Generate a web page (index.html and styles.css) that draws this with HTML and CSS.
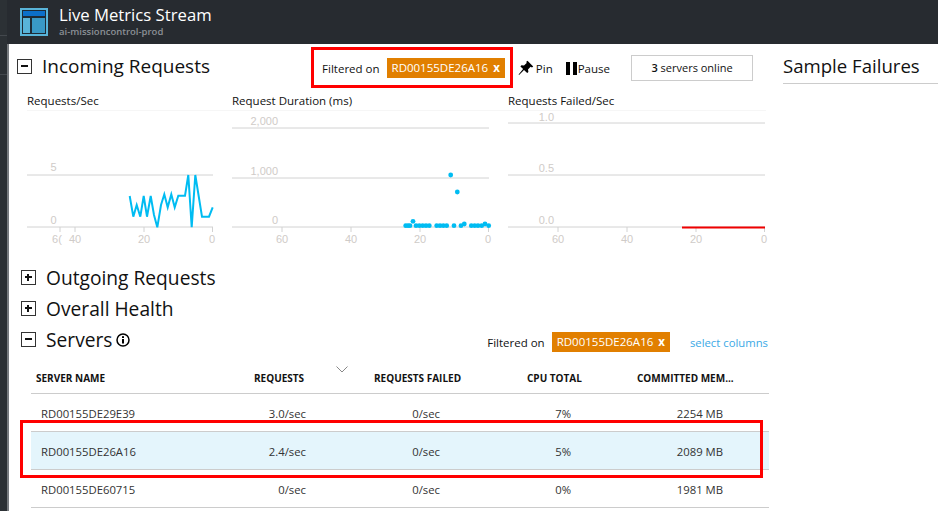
FILE: index.html
```html
<!DOCTYPE html>
<html lang="en">
<head>
    <meta charset="UTF-8">
    <meta name="viewport" content="width=device-width, initial-scale=1.0">
    <title>Live Metrics Stream</title>
    <link rel="stylesheet" href="styles.css">
</head>
<body>
<div class="rail"></div>
<div class="page">
    <header class="topbar">
        <svg class="logo" viewBox="0 0 28 28">
            <rect x="0" y="0" width="28" height="28" fill="#59b4d9"/>
            <rect x="2" y="2" width="24" height="24" fill="#1e2b36"/>
            <rect x="3" y="3" width="22" height="5" fill="#0c6fc9"/>
            <rect x="3" y="10" width="7" height="15" fill="#59b4d9"/>
            <rect x="12" y="10" width="13" height="15" fill="#3999c6"/>
        </svg>
        <div>
            <div class="topbar-title">Live Metrics Stream</div>
            <div class="topbar-sub">ai-missioncontrol-prod</div>
        </div>
    </header>

    <div class="content">
        <main class="metrics">
            <section class="incoming">
                <div class="incoming-head">
                    <span class="toggle minus"></span>
                    <h2>Incoming Requests</h2>
                    <div class="filter-tools">
                        <span class="filter-label">Filtered on</span>
                        <span class="chip">RD00155DE26A16 <b>x</b></span>
                        <span class="tool pin-tool">
                            <svg width="16" height="16" viewBox="0 0 16 16"><path d="M9.5 0.8 L15.2 6.4 L14 7.4 L12.6 6.8 L10 9.4 L10.4 12 L9.2 13 L6 9.9 L1 15 L0.6 14.6 L5.1 9 L2.4 6.4 L3.4 5.2 L6 5.6 L8.7 3.1 L8.3 1.8 Z" fill="#000"/></svg>
                            Pin
                        </span>
                        <span class="tool pause-tool"><i class="pause-bars"></i>Pause</span>
                        <span class="online"><b>3</b>&nbsp;servers online</span>
                    </div>
                </div>
                <div class="charts">
                    <div class="chart chart-rate">
                        <div class="chart-title">Requests/Sec</div>
                        <svg width="186" height="140" viewBox="27 110 186 140">
                            <line class="grid" x1="27" y1="175" x2="213" y2="175"/>
                            <line class="grid" x1="27" y1="227" x2="213" y2="227"/>
                            <line class="grid" x1="60" y1="227" x2="60" y2="232"/>
                            <line class="grid" x1="75" y1="227" x2="75" y2="232"/>
                            <line class="grid" x1="144" y1="227" x2="144" y2="232"/>
                            <line class="grid" x1="212.5" y1="227" x2="212.5" y2="232"/>
                            <text x="53.5" y="171" text-anchor="middle">5</text>
                            <text x="53.5" y="224" text-anchor="middle">0</text>
                            <text x="57" y="243" text-anchor="middle">6(</text>
                            <text x="75" y="243" text-anchor="middle">40</text>
                            <text x="144" y="243" text-anchor="middle">20</text>
                            <text x="212" y="243" text-anchor="middle">0</text>
                            <polyline class="line-blue" points="129.7,196 133.3,216.7 136.7,205 140.3,216.7 143.7,196 147,216.7 150.7,196 154,215 157.3,227.3 161,205 164.3,194.3 167.7,207.3 171.3,194.3 174.7,207.3 178.3,195.7 185,195.7 188.3,175 191.7,227.3 195.3,175 202,216.7 209,216.7 212.7,207.3"/>
                        </svg>
                    </div>
                    <div class="chart chart-duration">
                        <div class="chart-title">Request Duration (ms)</div>
                        <svg width="258" height="140" viewBox="232 110 258 140">
                            <line class="grid" x1="232" y1="128" x2="489" y2="128"/>
                            <line class="grid" x1="232" y1="178" x2="489" y2="178"/>
                            <line class="grid" x1="232" y1="227" x2="489" y2="227"/>
                            <line class="grid" x1="282" y1="227" x2="282" y2="232"/>
                            <line class="grid" x1="351" y1="227" x2="351" y2="232"/>
                            <line class="grid" x1="420" y1="227" x2="420" y2="232"/>
                            <line class="grid" x1="488.5" y1="227" x2="488.5" y2="232"/>
                            <text x="278" y="125" text-anchor="end">2,000</text>
                            <text x="278" y="175" text-anchor="end">1,000</text>
                            <text x="278" y="224" text-anchor="end">0</text>
                            <text x="282" y="243" text-anchor="middle">60</text>
                            <text x="351" y="243" text-anchor="middle">40</text>
                            <text x="420" y="243" text-anchor="middle">20</text>
                            <text x="488" y="243" text-anchor="middle">0</text>
                            <g class="dots">
                                <circle cx="405.7" cy="225.7" r="2.4"/><circle cx="408" cy="225.7" r="2.4"/><circle cx="410" cy="225.7" r="2.4"/>
                                <circle cx="413" cy="221.3" r="2.4"/>
                                <circle cx="416" cy="225.7" r="2.4"/><circle cx="419.3" cy="225.7" r="2.4"/><circle cx="422.7" cy="225.7" r="2.4"/><circle cx="426" cy="225.7" r="2.4"/><circle cx="429.3" cy="225.7" r="2.4"/>
                                <circle cx="436.7" cy="225.7" r="2.4"/><circle cx="440" cy="225.7" r="2.4"/><circle cx="443.3" cy="225.7" r="2.4"/><circle cx="446.7" cy="225.7" r="2.4"/>
                                <circle cx="450.7" cy="175" r="2.4"/>
                                <circle cx="454" cy="225.7" r="2.4"/>
                                <circle cx="457.3" cy="192" r="2.4"/>
                                <circle cx="461" cy="225.7" r="2.4"/>
                                <circle cx="464.3" cy="224" r="2.4"/>
                                <circle cx="471.3" cy="225.7" r="2.4"/><circle cx="474.7" cy="225.7" r="2.4"/><circle cx="478" cy="225.7" r="2.4"/><circle cx="481.7" cy="225.7" r="2.4"/>
                                <circle cx="485" cy="224" r="2.4"/>
                                <circle cx="488.7" cy="225.7" r="2.4"/>
                            </g>
                        </svg>
                    </div>
                    <div class="chart chart-failed">
                        <div class="chart-title">Requests Failed/Sec</div>
                        <svg width="258" height="140" viewBox="508 110 258 140">
                            <line class="grid" x1="508" y1="123" x2="765" y2="123"/>
                            <line class="grid" x1="508" y1="175" x2="765" y2="175"/>
                            <line class="grid" x1="508" y1="227" x2="765" y2="227"/>
                            <line class="grid" x1="558" y1="227" x2="558" y2="232"/>
                            <line class="grid" x1="627" y1="227" x2="627" y2="232"/>
                            <line class="grid" x1="696" y1="227" x2="696" y2="232"/>
                            <line class="grid" x1="764.5" y1="227" x2="764.5" y2="232"/>
                            <text x="554" y="121" text-anchor="end">1.0</text>
                            <text x="554" y="172" text-anchor="end">0.5</text>
                            <text x="554" y="224" text-anchor="end">0.0</text>
                            <text x="558" y="243" text-anchor="middle">60</text>
                            <text x="627" y="243" text-anchor="middle">40</text>
                            <text x="696" y="243" text-anchor="middle">20</text>
                            <text x="764" y="243" text-anchor="middle">0</text>
                            <line class="line-red" x1="682" y1="227.5" x2="765" y2="227.5"/>
                        </svg>
                    </div>
                </div>
            </section>

            <div class="section-head first-collapsed"><span class="toggle plus"></span><h2>Outgoing Requests</h2></div>
            <div class="section-head"><span class="toggle plus"></span><h2>Overall Health</h2></div>
            <div class="section-head">
                <span class="toggle minus"></span><h2>Servers</h2>
                <svg class="info" width="14" height="14" viewBox="0 0 14 14"><circle cx="7" cy="7" r="6" fill="none" stroke="#000" stroke-width="1.5"/><rect x="6" y="6" width="2" height="4.5"/><rect x="6" y="3.2" width="2" height="1.8"/></svg>
                <div class="servers-tools">
                    <span class="filter-label">Filtered on</span>
                    <span class="chip">RD00155DE26A16 <b>x</b></span>
                    <a class="select-columns">select columns</a>
                </div>
            </div>

            <div class="servers">
                <div class="row row-head">
                    <span>SERVER NAME</span>
                    <span>REQUESTS</span>
                    <span>REQUESTS FAILED</span>
                    <span>CPU TOTAL</span>
                    <span>COMMITTED MEM...</span>
                    <svg class="sort" width="12" height="7" viewBox="0 0 12 7"><path d="M0.5 0.5 L6 6 L11.5 0.5" fill="none" stroke="#888" stroke-width="1"/></svg>
                </div>
                <div class="row">
                    <span>RD00155DE29E39</span><span>3.0/sec</span><span>0/sec</span><span>7%</span><span>2254 MB</span>
                </div>
                <div class="row selected">
                    <span>RD00155DE26A16</span><span>2.4/sec</span><span>0/sec</span><span>5%</span><span>2089 MB</span>
                </div>
                <div class="row">
                    <span>RD00155DE60715</span><span>0/sec</span><span>0/sec</span><span>0%</span><span>1981 MB</span>
                </div>
            </div>
        </main>

        <aside class="failures">
            <h2>Sample Failures</h2>
        </aside>
    </div>
</div>

<div class="callout callout-filter"></div>
<div class="callout callout-row"></div>
</body>
</html>
```

FILE: styles.css
```css
html, body {
    height: 100%;
}
body {
    margin: 0;
    display: flex;
    height: 511px;
    overflow: hidden;
    background: #ffffff;
    color: #111111;
    font-family: "Open Sans", "Noto Sans", sans-serif;
    font-size: 12px;
}
.rail {
    width: 7px;
    flex: none;
    background: #2c3135;
    border-right: 2px solid #777b7f;
}
.rail::before,
.rail::after {
    content: "";
    display: block;
    height: 35px;
    border-bottom: 1px solid #43484d;
}
.rail::after {
    height: 38px;
}
.page {
    flex: 1;
    min-width: 0;
}
.topbar {
    height: 44px;
    margin-left: -2px;
    background: #272b30;
    display: flex;
    align-items: center;
    gap: 11px;
    padding-left: 13px;
    color: #ffffff;
}
.logo {
    width: 28px;
    height: 28px;
    flex: none;
}
.topbar-title {
    font-size: 16.7px;
    line-height: 22px;
    margin-top: -2px;
}
.topbar-sub {
    font-size: 9.5px;
    font-weight: 600;
    line-height: 12px;
    color: #8b9096;
}
.content {
    display: flex;
}
.metrics {
    width: 761px;
    flex: none;
}
.failures {
    margin-left: 13px;
    flex: 1;
}
.failures h2 {
    margin: 0;
    height: 39px;
    line-height: 44px;
    font-size: 18.6px;
    font-weight: 400;
    border-bottom: 1px solid #cccccc;
}
h2 {
    margin: 0;
    font-size: 19px;
    font-weight: 400;
}
.toggle {
    width: 13px;
    height: 13px;
    flex: none;
    border: 1px solid #333333;
    position: relative;
}
.toggle::before {
    content: "";
    position: absolute;
    left: 3px;
    top: 5px;
    height: 2px;
    background: #111111;
    width: 7px;
}
.plus::after {
    content: "";
    position: absolute;
    left: 5px;
    top: 3px;
    width: 2px;
    height: 7px;
    background: #111111;
}
.incoming-head {
    display: flex;
    align-items: center;
    height: 44px;
    padding-left: 8px;
}
.incoming-head h2 {
    margin-left: 10px;
}
.filter-tools {
    margin-left: auto;
    display: flex;
    align-items: center;
    padding: 4px 17px 0 0;
}
.filter-label {
    font-size: 11.5px;
}
.chip {
    background: #e17f00;
    color: #ffffff;
    height: 20px;
    line-height: 20px;
    padding: 0 5px;
    margin-left: 7px;
    font-size: 11.5px;
    white-space: nowrap;
}
.chip b {
    margin-left: 2px;
}
.tool {
    display: flex;
    align-items: center;
    font-size: 11.5px;
}
.pin-tool {
    margin-left: 13px;
    gap: 2px;
}
.pause-tool {
    margin-left: 13px;
    gap: 1px;
}
.pause-bars {
    width: 3px;
    height: 13px;
    border-left: 4px solid #000000;
    border-right: 4px solid #000000;
}
.online {
    margin-left: 21px;
    width: 120px;
    height: 24px;
    line-height: 24px;
    text-align: center;
    border: 1px solid #cccccc;
    font-size: 11px;
}
.online b {
    font-weight: 600;
}
.charts {
    display: flex;
    padding: 4px 0 0 18px;
}
.chart-title {
    height: 18px;
    line-height: 17px;
    font-size: 11.5px;
    border-bottom: 1px solid #f6f6f6;
    margin-bottom: -1px;
}
.chart svg {
    display: block;
    overflow: visible;
}
.chart-rate {
    width: 205px;
}
.chart-duration {
    width: 276px;
}
.chart-failed {
    width: 258px;
}
.chart text {
    font-family: "Liberation Sans", Arial, sans-serif;
    font-size: 11px;
    fill: #cfcbc8;
}
.grid {
    stroke: #d2d2d2;
    stroke-width: 1;
}
.line-blue {
    fill: none;
    stroke: #00bcf2;
    stroke-width: 2;
}
.dots circle {
    fill: #00bcf2;
}
.line-red {
    stroke: #f00000;
    stroke-width: 2;
}
.section-head {
    display: flex;
    align-items: center;
    height: 31px;
    padding-left: 12px;
}
.first-collapsed {
    margin-top: 12px;
}
.section-head h2 {
    margin-left: 10px;
    font-size: 19.2px;
}
.info {
    margin-left: 4px;
}
.servers-tools {
    margin-left: auto;
    display: flex;
    align-items: center;
    padding: 5px 2px 0 0;
}
.select-columns {
    margin-left: 20px;
    color: #3ba9e6;
    font-size: 11.3px;
}
.servers {
    margin-left: 22px;
    width: 738px;
}
.row {
    display: grid;
    grid-template-columns: 209px 120px 150px 110px 149px;
    height: 35px;
    padding-top: 2px;
    line-height: 36px;
    border-bottom: 1px solid #cccccc;
    color: #333333;
    font-size: 11.3px;
}
.row span:nth-child(1) {
    padding-left: 10px;
}
.row span:nth-child(2) {
    text-align: right;
    padding-right: 54px;
}
.row span:nth-child(3) {
    text-align: right;
    padding-right: 70px;
}
.row span:nth-child(4) {
    text-align: right;
    padding-right: 49px;
}
.row span:nth-child(5) {
    text-align: right;
    padding-right: 46px;
}
.row-head {
    position: relative;
    height: 38px;
    padding-top: 0;
    line-height: 46px;
    color: #111111;
    font-size: 10px;
    font-weight: 700;
}
.row-head span:nth-child(n) {
    text-align: left;
    padding-right: 0;
    padding-left: 14px;
    white-space: nowrap;
}
.row-head span:nth-child(1) {
    padding-left: 5px;
}
.row-head span:nth-child(4),
.row-head span:nth-child(5) {
    padding-left: 17px;
}
.sort {
    position: absolute;
    left: 305px;
    top: 11px;
}
.selected {
    background: #e4f5fc;
}
.callout {
    position: absolute;
    border: 3px solid #ff0000;
    box-sizing: border-box;
}
.callout-filter {
    left: 311px;
    top: 47px;
    width: 202px;
    height: 41px;
}
.callout-row {
    left: 20px;
    top: 420px;
    width: 743px;
    height: 58px;
}
```
